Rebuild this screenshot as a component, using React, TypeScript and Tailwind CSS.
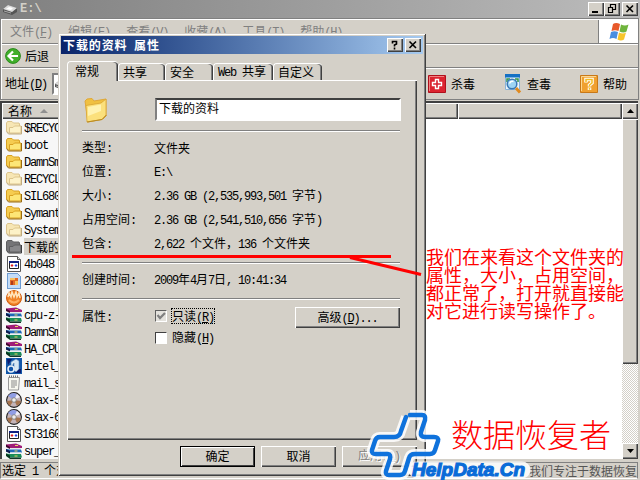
import React from "react";

const raised =
  "bg-[#d4d0c8] shadow-[inset_1px_1px_0_#ffffff,inset_-1px_-1px_0_#404040,inset_-2px_-2px_0_#808080]";
const line = "h-0.5 border-t border-t-[#808080] border-b border-b-white";

// Latin runs take a half-width cell, Chinese glyphs a full one
const Txt: React.FC<{ children: string }> = ({ children }) => (
  <span className="whitespace-pre">
    {children.split(/([\x20-\x7e]+)/).map((part, i) =>
      /^[\x20-\x7e]/.test(part) ? (
        <span key={i} className="font-['Liberation_Mono',monospace] tracking-[-1.2px]">{part}</span>
      ) : (
        part
      )
    )}
  </span>
);

const Key: React.FC<{ k: string }> = ({ k }) => (
  <span className="font-['Liberation_Mono',monospace] tracking-[-1.2px]">
    (<u className="underline-offset-1">{k}</u>)
  </span>
);

const files = [
  { name: "$RECYCLE.BIN", icon: "faded" },
  { name: "boot", icon: "folder" },
  { name: "DamnSmall", icon: "folder" },
  { name: "RECYCLER", icon: "faded" },
  { name: "SIL680", icon: "folder" },
  { name: "Symantec", icon: "folder" },
  { name: "System V", icon: "faded" },
  { name: "下载的资料", icon: "selected" },
  { name: "4b048", icon: "app" },
  { name: "200807", icon: "image" },
  { name: "bitcomet", icon: "comet" },
  { name: "cpu-z-1", icon: "rar" },
  { name: "DamnSmall", icon: "rar" },
  { name: "HA_CPUZ", icon: "rar" },
  { name: "intel_c", icon: "intel" },
  { name: "mail_se", icon: "note" },
  { name: "slax-5", icon: "disc" },
  { name: "slax-6", icon: "disc" },
  { name: "ST3160", icon: "app" },
  { name: "super_x", icon: "rar" },
];

const DriveIcon: React.FC = () => (
  <svg className="h-4 w-4 shrink-0" viewBox="0 0 16 16">
    <path d="m1 8 5-4 9 3v4l-5 3-9-3z" fill="#555" />
    <path d="m1 8 5-4 9 3-5 4z" fill="#dcdcdc" />
    <path d="m4 8 3-2 4 1-2 2z" fill="#fff" />
    <path d="m2 10 7 2" stroke="#aaa" />
  </svg>
);

const FileIcon: React.FC<{ type: string }> = ({ type }) => {
  const cls = "h-4 w-4 shrink-0";
  if (type === "folder" || type === "faded" || type === "selected") {
    const [edge, back, front, shadow] =
      type === "folder"
        ? ["#d8a020", "#f5cc50", "#fde676", "#9a6c10"]
        : type === "faded"
          ? ["#dcc48c", "#f7e6b4", "#fdf2c8", "#c0ab80"]
          : ["#5e5e60", "#747477", "#88888b", "#3c3c3e"];
    return (
      <svg className={cls} viewBox="0 0 16 16">
        <path d="M.5 3 1.500 1.500H6L7.500 3H13l.5 1v9h-11L.5 11z" fill={back} stroke={edge} />
        <path d="M3.500 13V7.500H7L8.500 6h6.500v7z" fill={front} stroke={edge} />
        <path d="M15.500 6v8H2.500L.5 11.500" fill="none" stroke={shadow} />
      </svg>
    );
  }
  if (type === "rar") {
    return (
      <svg className={cls} viewBox="0 0 16 16">
        <path d="M0 1.500 10 .5l6 2.500v2H4L0 3z" fill="#a01c78" />
        <path d="M0 1.500 4 4v2L0 4z" fill="#400830" />
        <path d="M4 5h11v1H5z" fill="#e8e8e8" />
        <path d="m0 6 4 .5h11l1 3H4L0 8.500z" fill="#1c68b8" />
        <path d="m0 6 4 2v2.500L0 8.500z" fill="#0c1c50" />
        <path d="M4 9.500h11v1H5z" fill="#e8e8e8" />
        <path d="m0 10.500 4 .5h11l1 3.500H4l-4-2z" fill="#188c58" />
        <path d="m0 10.500 4 2V16l-4-3z" fill="#083820" />
        <path d="M4 14.500h11V16H4z" fill="#103828" />
        <path d="M9 2.500h3M8.500 8h3M8.500 13h3" stroke="#e8d860" />
      </svg>
    );
  }
  if (type === "disc") {
    return (
      <svg className={cls} viewBox="0 0 16 16">
        <circle cx="8" cy="8" r="7.400" fill="#c4b4b8" stroke="#222" strokeWidth="1.100" />
        <path d="M8 8 2 4a7 7 0 0 1 6-3l3 1z" fill="#8f9de5" />
        <path d="M8 8 4 14a7 7 0 0 1-3-5zM8 8l7 1a7 7 0 0 1-4 5z" fill="#a5744f" />
        <path d="m8 8 3-6 3 3z" fill="#eeeefc" />
        <circle cx="8" cy="8" r="2.300" fill="#eee" stroke="#888" />
      </svg>
    );
  }
  if (type === "comet") {
    return (
      <svg className={cls} viewBox="0 0 16 16">
        <circle cx="8" cy="8" r="7.500" fill="#f08024" stroke="#d05c10" />
        <path d="M2 7 3 3l2 4 1-5 2 5 2-5 1 5 2-4 1 5" fill="none" stroke="#ffe4bc" strokeWidth="1.500" />
        <path d="M3 10q5 5 10 0" fill="none" stroke="#ffb060" strokeWidth="2" />
      </svg>
    );
  }
  if (type === "intel") {
    return (
      <svg className={cls} viewBox="0 0 16 16">
        <path d="M0 0h16v16H0z" fill="#1256a8" />
        <path d="M1 1h5L2 7zM11 11h4v4h-6z" fill="#0b1c70" />
        <path d="M5 7V4l5-3 3 2v8l-3 3-2-2V5L6 8z" fill="#d8e8f4" stroke="#5b87b8" strokeWidth=".6" />
        <circle cx="5" cy="11" r="3" fill="none" stroke="#e8f0f8" strokeWidth="1.500" />
      </svg>
    );
  }
  if (type === "note") {
    return (
      <svg className={cls} viewBox="0 0 16 16">
        <path d="M2.500 2.500h11l-1 12.500h-10z" fill="#f8f8f0" stroke="#999" />
        <path d="M3 1.500h10" stroke="#777" strokeWidth="2" strokeDasharray="1 1" />
        <path d="M5 6h6M5 8h6M5 10h6M5 12h4" stroke="#8a8a8a" />
      </svg>
    );
  }
  return (
    <svg className={cls} viewBox="0 0 16 16">
      <path d="M1.500.5h10l3 3v12h-13z" fill="#fff" stroke="#555" />
      <path d="M11.500.5v3h3" fill="#ddd" stroke="#555" />
      {type === "app" ? (
        <>
          <path d="M3.500 5.500h9v7h-9z" fill="#fff" stroke="#222" />
          <path d="M3 5h10v2H3z" fill="#102080" />
          <path d="m6 8 1.500 1.500L6 11 4.500 9.500z" fill="#e02020" />
          <path d="m10 8 1.500 1.500L10 11 8.500 9.500z" fill="#2040e0" />
        </>
      ) : (
        <>
          <path d="M1.500.5h10l3 3v12h-13z" fill="#c4dcf6" stroke="#6c9cd4" />
          <path d="M4 5h8v7H4z" fill="#e46a25" />
          <path d="M4 5h5v2H4zM9 8h3v4H9z" fill="#f8c060" />
          <path d="M5 8h2v4H5z" fill="#b03a18" />
        </>
      )}
    </svg>
  );
};

const CaptionButton: React.FC<{ d: string; className?: string; strokeWidth?: number }> = ({
  d,
  className = "",
  strokeWidth = 1.6,
}) => (
  <div className={`h-3.5 w-4 ${raised} ${className}`}>
    <svg className="h-3.5 w-4" viewBox="0 0 16 14">
      <path d={d} fill="none" stroke="#000" strokeWidth={strokeWidth} />
    </svg>
  </div>
);

const closePath = "m4.500 3.500 6.500 6.500M11 3.500 4.500 10";

const Explorer: React.FC = () => (
  <div className="flex h-[480px] w-[640px] flex-col bg-[#d4d0c8]">
    <div className="flex h-[18px] shrink-0 items-center bg-linear-to-r from-[#808080] to-[#bcbcbc] pl-0.5 pr-0.5">
      <DriveIcon />
      <span className="ml-0.5 font-bold text-[#d4d0c8] font-['Liberation_Mono',monospace]">{"E:\\"}</span>
      <CaptionButton className="ml-auto" d="M4 10h6" strokeWidth={2} />
      <CaptionButton d="M6 2.500h6M6.500 2v3M11.500 2v5.500H9M4 5.500h5M4.500 5v5.500h4V5" strokeWidth={1.2} />
      <CaptionButton className="ml-0.5" d={closePath} />
    </div>

    <div className="mr-px flex h-[82px] shrink-0 flex-col border border-[#808080] bg-[#d4d0c8] pl-px shadow-[inset_1px_1px_0_#ffffff]">
      <div className="flex h-[25px] border-b border-[#808080] pl-2 pt-px">
        <div className="flex items-center gap-4 text-[#808080]">
          <span>文件<Key k="F" /></span>
          <span>编辑<Key k="E" /></span>
          <span>查看<Key k="V" /></span>
          <span>收藏<Key k="A" /></span>
          <span>工具<Key k="T" /></span>
          <span>帮助<Key k="H" /></span>
        </div>
        <div className="ml-auto flex w-10 items-center justify-center border-l border-[#808080] bg-white">
          <svg className="h-5 w-5" viewBox="0 0 20 20">
            <path d="M4 2q3-2 7 0L9.500 9Q6 7.500 2.500 9z" fill="#e8592b" />
            <path d="M12 2.500q4 2 7.500 0l-2 7q-3 2-7 0z" fill="#6fb43c" />
            <path d="M2 10q3.500-1.500 7 0l-1.500 7Q4 15 .5 17z" fill="#4a8ee0" />
            <path d="M10 10.500q4 2 7 0l-2 7q-3 2-6.500 0z" fill="#f7c52c" />
          </svg>
        </div>
      </div>
      <div className="flex h-6 items-center border-b border-[#808080] border-t border-t-white pl-[3px]">
        <svg className="h-4 w-4" viewBox="0 0 16 16">
          <circle cx="8" cy="8" r="7.400" fill="#3fae2a" stroke="#2c8a1c" />
          <path d="M13 8H4M8 3.500 3.500 8 8 12.500" fill="none" stroke="#fff" strokeWidth="2.200" />
        </svg>
        <span className="ml-1">后退</span>
      </div>
      <div className="flex flex-1 items-center border-t border-white pl-[3px]">
        <span>地址<Key k="D" /></span>
        <div className="ml-[5px] flex h-[22px] w-[360px] items-center border-2 border-t-[#808080] border-l-[#808080] border-r-white border-b-white bg-white">
          <DriveIcon />
        </div>
        <div className="ml-auto flex items-center pr-[11px]">
          <svg className="h-[18px] w-[18px]" viewBox="0 0 18 18">
            <path d="M.5.500h17v17H.5z" fill="#dc2430" stroke="#b0101c" />
            <path d="M1.500 16V1.500H16" fill="none" stroke="#f08080" />
            <path d="M7.500 4.500h3v3h3v3h-3v3h-3v-3h-3v-3h3z" fill="#d82030" stroke="#fff" strokeWidth="1.400" />
          </svg>
          <span className="ml-[5px]">杀毒</span>
          <svg className="ml-[29px] h-[20px] w-[18px]" viewBox="0 0 18 20">
            <path d="M1.500 1.500h14v14h-14z" fill="#eaf4fc" stroke="#8ab4d8" />
            <path d="M1 0h15v3.500H1z" fill="#1470c4" />
            <path d="M3 8V5h3M11 5h3v3" fill="none" stroke="#349444" strokeWidth="1.500" />
            <circle cx="8" cy="10" r="4.800" fill="#9ed4f4" stroke="#3a78b4" strokeWidth="1.500" />
            <path d="M5.500 9.500q1-3 4-2" fill="none" stroke="#fff" strokeWidth="1.500" />
            <path d="m12 14 4 4.500" stroke="#e08a20" strokeWidth="3" />
          </svg>
          <span className="ml-[5px]">查毒</span>
          <svg className="ml-[29px] h-[18px] w-[18px]" viewBox="0 0 18 18">
            <path d="M.5.500h17v17H.5z" fill="#f0a030" stroke="#c87818" />
            <path d="M1.500 16V1.500H16" fill="none" stroke="#fcd890" />
            <path d="M6 7.500V4.500h6V8L9.500 10v1.500M9.500 12.500v2.500" fill="none" stroke="#fff" strokeWidth="3.500" />
            <path d="M6 7V4.500h6V8L9.500 10v1.500M9.500 13v1.800" fill="none" stroke="#f2bc20" strokeWidth="1.500" />
          </svg>
          <span className="ml-[5px]">帮助</span>
        </div>
      </div>
    </div>

    <div className="mr-0.5 mt-px flex h-[358px] shrink-0 border-l-2 border-t-2 border-[#404040] bg-white">
      <div className="flex flex-1 flex-col">
        <div className="flex h-4 shrink-0">
          <div className={`flex w-[456px] items-center gap-2 pl-1.5 ${raised}`}>
            <span>名称</span>
            <svg className="h-1.5 w-2" viewBox="0 0 8 6"><path d="m4 1 4 4H0z" fill="#909090" /></svg>
          </div>
          <div className={`flex-1 ${raised}`} />
        </div>
        <div className="flex w-[150px] flex-1 flex-col overflow-hidden bg-[#f7f7f7]">
          {files.map((f, i) => (
            <div key={i} className="flex h-[17px] shrink-0 items-center pl-1">
              <FileIcon type={f.icon} />
              <span className={`ml-0.5 leading-[17px] ${f.icon === "selected" ? "bg-[#d4d0c8]" : ""}`}>
                <Txt>{f.name}</Txt>
              </span>
            </div>
          ))}
        </div>
      </div>
      <div className="flex w-4 flex-col bg-white bg-[repeating-conic-gradient(#d4d0c8_0_25%,#ffffff_0_50%)] bg-size-[2px_2px]">
        <div className={`flex h-4 items-center justify-center ${raised}`}>
          <svg className="h-1 w-[7px]" viewBox="0 0 7 4"><path d="M3.500 0 7 4H0z" /></svg>
        </div>
        <div className={`h-[245px] ${raised}`} />
        <div className={`mt-auto flex h-4 items-center justify-center ${raised}`}>
          <svg className="h-1 w-[7px]" viewBox="0 0 7 4"><path d="M3.500 4 7 0H0z" /></svg>
        </div>
      </div>
    </div>

    <div className="mr-0.5 mt-[3px] flex h-[17px] items-center justify-between border border-[#808080] border-b-white pl-px">
      <Txt>选定 1 个对象</Txt>
      <span className="text-[#555555]">我们专注于数据恢复</span>
    </div>
  </div>
);

const Field: React.FC<{ label: string; value: string }> = ({ label, value }) => (
  <div className="flex h-6 items-center">
    <span className="w-[72px]"><Txt>{label}</Txt></span>
    <Txt>{value}</Txt>
  </div>
);

const PropertiesDialog: React.FC = () => (
  <div className="absolute left-[58px] top-[33px] flex h-[443px] w-[368px] flex-col bg-[#d4d0c8] p-[3px] shadow-[inset_1px_1px_0_#d4d0c8,inset_-1px_-1px_0_#404040,inset_2px_2px_0_#ffffff,inset_-2px_-2px_0_#808080]">
    <div className="flex h-[18px] shrink-0 items-center bg-linear-to-r from-[#0a246a] to-[#a6caf0] pl-0.5 pr-0.5">
      <span className="font-bold text-white tracking-[0.9px] [word-spacing:3px]">下载的资料 属性</span>
      <CaptionButton className="ml-auto" d="M5.500 5.500V3.500h4V6L7.500 7v1.500M7.500 9.500v2" />
      <CaptionButton className="ml-0.5" d={closePath} />
    </div>

    <div className="ml-1.5 mt-[7px] flex h-[19px] shrink-0 items-end">
      <div className="z-10 -mb-px flex h-5 w-[51px] items-center rounded-t-sm border-l border-t border-white bg-[#d4d0c8] pb-0.5 pl-[7px] shadow-[inset_-1px_0_0_#404040,inset_-2px_0_0_#808080]">
        常规
      </div>
      {[
        { name: "共享", width: "w-[47px]" },
        { name: "安全", width: "w-[48px]" },
        { name: "Web 共享", width: "w-[60px]" },
        { name: "自定义", width: "w-[49px]" },
      ].map((tab) => (
        <div
          key={tab.name}
          className={`flex h-[17px] items-center rounded-t-sm border-t border-l border-white pl-1 shadow-[inset_-1px_0_0_#404040,inset_-2px_0_0_#808080] ${tab.width}`}
        >
          <Txt>{tab.name}</Txt>
        </div>
      ))}
    </div>

    <div className={`ml-1.5 flex h-[360px] w-[350px] shrink-0 flex-col pl-[15px] pr-[17px] pt-[18px] ${raised}`}>
      <div className="flex h-[23px] items-center">
        <svg className="ml-0.5 h-[26px] w-6" viewBox="0 0 24 26">
          <path d="M1 4 3 2l5-.5L10 4l12-2v17l-3 3-15 3z" fill="#f0c040" stroke="#e0a838" />
          <path d="M2 8.500 17 6l5-4v16l-4 4.500L3 25z" fill="#fbe07c" stroke="#d9a432" strokeWidth=".8" />
          <path d="m4 10 13-2.500V14L4 19z" fill="#fff2b0" />
          <path d="m3 25 15-2.500L22.500 18" fill="none" stroke="#b88a24" />
        </svg>
        <div className="ml-auto flex h-[23px] w-[246px] translate-x-px items-center border-2 border-l-[#808080] border-t-[#404040] border-r-white border-b-white bg-white pl-0.5 pb-1">
          下载的资料
        </div>
      </div>
      <div className={`mt-[9px] ${line}`} />
      <div className="mt-1 flex flex-col">
        <Field label="类型:" value="文件夹" />
        <Field label="位置:" value={"E:\\"} />
        <Field label="大小:" value="2.36 GB (2,535,993,501 字节)" />
        <Field label="占用空间:" value="2.36 GB (2,541,510,656 字节)" />
        <Field label="包含:" value="2,622 个文件，136 个文件夹" />
      </div>
      <div className={`mt-1.5 ${line}`} />
      <div className="mt-1"><Field label="创建时间:" value="2009年4月7日, 10:41:34" /></div>
      <div className={`mt-1.5 ${line}`} />
      <div className="mt-[7px] flex">
        <span className="w-[73px] pt-px"><Txt>属性:</Txt></span>
        <div className="flex flex-col gap-1">
          <div className="flex h-[18px] items-center gap-1">
            <div className="h-3 w-3 border border-t-[#606060] border-l-[#606060] border-r-white border-b-white bg-[#e4e2dd]">
              <svg className="h-2.5 w-2.5" viewBox="0 0 10 10">
                <path d="m1.500 4 2.500 3 5-5" fill="none" stroke="#808080" strokeWidth="2.200" />
              </svg>
            </div>
            <span className="h-4 border border-dotted border-black leading-[14px]">只读<Key k="R" /></span>
          </div>
          <div className="flex h-[18px] items-center gap-[5px]">
            <div className="h-3 w-3 border border-t-[#404040] border-l-[#404040] border-r-white border-b-white bg-white" />
            <span>隐藏<Key k="H" /></span>
          </div>
        </div>
        <div className={`ml-auto flex h-[21px] w-[105px] items-center justify-center ${raised}`}>
          <span>高级<Key k="D" /><Txt>...</Txt></span>
        </div>
      </div>
    </div>

    <div className="ml-[119px] mt-1.5 flex gap-1.5">
      <div className="flex h-[21px] w-[75px] shrink-0 items-center justify-center border border-black bg-[#d4d0c8] pb-0.5 shadow-[inset_1px_1px_0_#ffffff,inset_-1px_-1px_0_#404040]">
        确定
      </div>
      <div className={`flex h-[21px] w-[75px] shrink-0 items-center justify-center pb-0.5 ${raised}`}>取消</div>
      <div className={`flex h-[21px] w-[75px] shrink-0 items-center pb-0.5 pl-4 text-[#808080] text-shadow-[1px_1px_0_#ffffff] ${raised}`}>
        <span>应用<Key k="A" /></span>
      </div>
    </div>
  </div>
);

const logoPath =
  "M406 417 401 431Q400 437 394 437H380Q376 437 375 441L372 450Q371 454 376 454H388Q391 454 390 459L386 471Q385 475 389 475H400Q404 475 405 471L409 458Q410 454 415 454H430Q434 454 435 450L438 441Q439 437 434 437H425Q420 437 421 432L425 420Q426 415 422 415H410";

export default function App() {
  return (
    <div className="relative h-[480px] w-[640px] overflow-hidden font-['Noto_Sans_CJK_SC',sans-serif] text-xs leading-4 text-black">
      <Explorer />
      <PropertiesDialog />

      <svg className="absolute left-0 top-0 h-[480px] w-[640px]" viewBox="0 0 640 480">
        <path d="M72 256.500H391" stroke="#ff0000" strokeWidth="3" />
        <path d="m350 257.500 71 17" stroke="#ff0000" strokeWidth="3" />
        <path d={logoPath} fill="none" stroke="#ffffff" strokeWidth="10" strokeLinejoin="round" opacity=".85" />
        <path d="M417 470H522" stroke="#ffffff" strokeWidth="17" strokeLinecap="round" opacity=".85" />
        <path d={logoPath} fill="none" stroke="#0f72dc" strokeWidth="4.500" strokeLinecap="round" strokeLinejoin="round" />
        <text
          x="412"
          y="476"
          textLength="113"
          className="fill-[#0a6bd8] stroke-[#0a6bd8] stroke-[1.2px] font-['Liberation_Sans',sans-serif] text-[19px] font-bold italic"
        >
          HelpData.Cn
        </text>
      </svg>

      <div className="absolute left-[426px] top-[247px] whitespace-nowrap text-[18px] leading-[18px] text-[#ff0000]">
        <p>我们在来看这个文件夹的</p>
        <p>属性，大小，占用空间，</p>
        <p>都正常了，打开就直接能</p>
        <p>对它进行读写操作了。</p>
      </div>
      <div className="absolute left-[451px] top-[415px] whitespace-nowrap text-[32px] font-light leading-9 text-[#ff0000]">
        数据恢复者
      </div>
    </div>
  );
}
